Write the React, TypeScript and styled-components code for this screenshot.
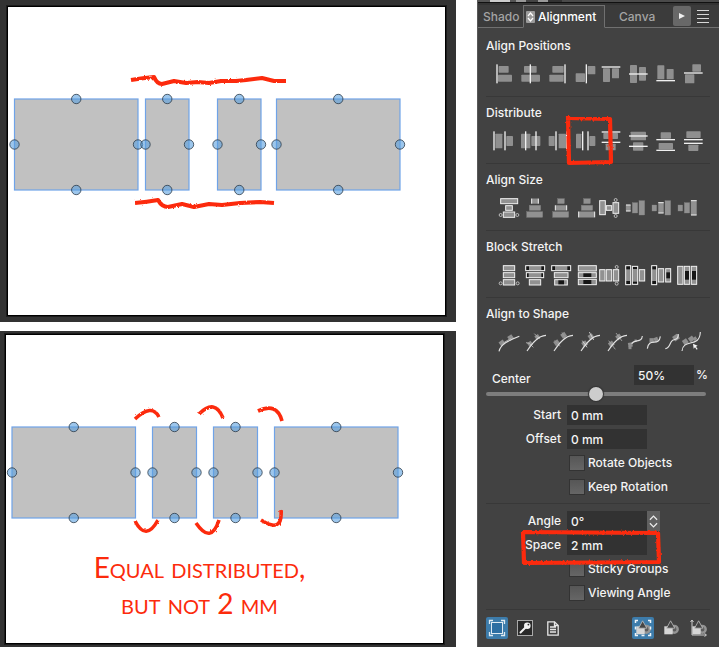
import React from "react";
import styled, { createGlobalStyle, css } from "styled-components";

const RED = "#fc2b0c";
const UI_FONT = `Inter, "Liberation Sans", sans-serif`;

const GlobalStyle = createGlobalStyle`
  *, *::before, *::after { box-sizing: border-box; }
  body { margin: 0; background: #fff; font-family: ${UI_FONT}; }
  button, input { font: inherit; color: inherit; }
`;

const Page = styled.main`
  display: grid;
  grid-template-columns: minmax(0, 1fr) 242px;
  column-gap: 21px;
  align-items: start;
`;

const Canvases = styled.div`
  display: flex;
  flex-direction: column;
  gap: 9px;
`;

const Frame = styled.section<{ $pad: string }>`
  padding: ${(p) => p.$pad};
  background: #333;
`;

const Artboard = styled.div`
  background: #fff;
  border: 1px solid #000;
  outline: 1px solid #1c1c1c;
`;

const Drawing = styled.svg`
  display: block;
  width: 100%;
  height: auto;
`;

const Note = styled.p`
  margin: 0;
  padding: 13px 50px 22px 0;
  color: ${RED};
  font: 400 28px/36px Lato, "Open Sans", sans-serif;
  font-variant-caps: small-caps;
  text-align: center;
`;

/* ---------- canvas objects ---------- */

type Block = { x: number; w: number };

const Blocks = ({ items, y }: { items: Block[]; y: number }) => {
  const h = 91;
  return (
    <>
      {items.map((b) => (
        <rect key={b.x} x={b.x} y={y} width={b.w} height={h} fill="#c1c1c1" stroke="#6fa3e8" strokeWidth="1.2" />
      ))}
      {items.flatMap((b) =>
        [
          [b.x + b.w / 2, y],
          [b.x + b.w / 2, y + h],
          [b.x, y + h / 2],
          [b.x + b.w, y + h / 2],
        ].map(([cx, cy]) => (
          <circle
            key={`${cx}-${cy}`}
            cx={cx}
            cy={cy}
            r="4.7"
            fill="#5aa0e0"
            fillOpacity=".6"
            stroke="#24323f"
            strokeOpacity=".75"
            strokeWidth="1"
          />
        )),
      )}
    </>
  );
};

const Brush = ({ id, paths, width = 4.2 }: { id: string; paths: string[]; width?: number }) => (
  <>
    <filter id={id} x="-10%" y="-50%" width="120%" height="200%">
      <feTurbulence type="fractalNoise" baseFrequency=".5" numOctaves="2" seed="4" />
      <feDisplacementMap in="SourceGraphic" scale="2.5" />
    </filter>
    {paths.map((d) => (
      <path key={d} d={d} fill="none" stroke={RED} strokeWidth={width} strokeLinejoin="round" filter={`url(#${id})`} />
    ))}
  </>
);

/* ---------- panel ---------- */

const Panel = styled.aside`
  display: flex;
  flex-direction: column;
  background: #424242;
  color: #f4f4f4;
  font-size: 12px;
  font-weight: 500;
  line-height: 16px;
  border-left: 1px solid #585858;
  padding-bottom: 8px;
`;

const WindowEdge = styled.div`
  height: 5px;
  border-bottom: 2px solid #333;
  background: linear-gradient(
      90deg,
      #555 0 12px,
      #ccc 12px 32px,
      #555 32px 38px,
      #999 38px 48px,
      #444 48px 60px,
      #999 60px 70px,
      #333 70px 84px,
      #4a4a4a 84px 100%
    )
    0 0 / 100% 2px no-repeat #111;
`;

const TabBar = styled.div`
  display: flex;
  height: 23px;
  background: #3b3b3b;
`;

const Tab = styled.button<{ $active?: boolean; $width: number; $indent: number }>`
  display: flex;
  align-items: center;
  gap: 3px;
  width: ${(p) => p.$width}px;
  padding: 1px 0 0 ${(p) => p.$indent}px;
  overflow: hidden;
  white-space: nowrap;
  background: none;
  border: 0;
  border-bottom: 1px solid #707070;
  color: #a4a4a4;
  ${(p) =>
    p.$active &&
    css`
      background: #424242;
      border: 1px solid #707070;
      border-bottom-color: #424242;
      color: #fff;
    `}
`;

const TabEnd = styled.div`
  display: flex;
  flex: 1;
  justify-content: flex-end;
  align-items: center;
  gap: 5px;
  padding-right: 9px;
  border-bottom: 1px solid #707070;
`;

const ScrollTabs = styled.button`
  display: grid;
  place-items: center;
  width: 18px;
  height: 20px;
  padding: 0;
  border: 0;
  border-radius: 2px;
  background: #686868;
`;

const PlainButton = styled.button`
  display: grid;
  padding: 0;
  border: 0;
  background: none;
`;

const Sections = styled.div`
  display: flex;
  flex-direction: column;
  padding: 2px 9px 0 8px;
`;

const Section = styled.section<{ $last?: boolean }>`
  padding: 8px 0 12px;
  border-bottom: 1px solid ${(p) => (p.$last ? "transparent" : "#383838")};
`;

const Title = styled.h2`
  margin: 0 0 10px;
  font-size: 12px;
  font-weight: 500;
  line-height: 16px;
`;

const IconRow = styled.div<{ $indent: number; $gap: number }>`
  display: flex;
  gap: ${(p) => p.$gap}px;
  padding-left: ${(p) => p.$indent}px;
`;

const IconGroup = styled.div<{ $gap: number }>`
  display: flex;
  gap: ${(p) => p.$gap}px;
`;

const IconButton = styled.button<{ $width?: number }>`
  position: relative;
  display: block;
  flex: none;
  width: ${(p) => p.$width ?? 20}px;
  height: 20px;
  padding: 0;
  border: 0;
  background: none;
`;

const IconSvg = styled.svg`
  display: block;
  width: 100%;
  height: 20px;
  overflow: visible;
`;

const Marker = styled.svg<{ $top: number; $left: number }>`
  position: absolute;
  z-index: 1;
  top: ${(p) => p.$top}px;
  left: ${(p) => p.$left}px;
  overflow: visible;
  pointer-events: none;
`;

const CenterRow = styled.div`
  display: flex;
  align-items: center;
  gap: 2px;
  padding-left: 6px;
  height: 20px;
`;

const CenterLabel = styled.label`
  flex: 1;
  padding-top: 8px;
`;

const Field = styled.input<{ $width: number }>`
  width: ${(p) => p.$width}px;
  height: 20px;
  padding: 0 4px;
  border: 0;
  border-radius: 0;
  background: #323232;
  outline: none;
`;

const Unit = styled.span`
  width: 14px;
`;

const Slider = styled.input`
  appearance: none;
  width: 220px;
  height: 18px;
  margin: 0;
  background: none;
  &::-webkit-slider-runnable-track {
    height: 4px;
    border-radius: 2px;
    background: #7d7d7d;
  }
  &::-webkit-slider-thumb {
    appearance: none;
    width: 14px;
    height: 14px;
    margin-top: -5px;
    border-radius: 50%;
    background: #cdcdcd;
    box-shadow: 0 0 1px 1px #333;
  }
`;

const FormGroup = styled.div<{ $top: number }>`
  display: flex;
  flex-direction: column;
  gap: 4px;
  padding: ${(p) => p.$top}px 0 6px;
  border-bottom: 1px solid #383838;
`;

const FormRow = styled.div`
  position: relative;
  display: grid;
  grid-template-columns: 75px auto auto;
  justify-content: start;
  align-items: center;
  height: 20px;
`;

const RowLabel = styled.label`
  text-align: right;
`;

const FieldCell = styled.div`
  display: flex;
  padding-left: 6px;
`;

const Stepper = styled.button`
  display: grid;
  place-items: center;
  width: 13px;
  height: 20px;
  padding: 0;
  border: 0;
  background: #606060;
`;

const CheckLabel = styled.label`
  display: flex;
  align-items: center;
  gap: 4px;
  height: 20px;
  padding-left: 84px;
`;

const Check = styled.input`
  appearance: none;
  width: 14px;
  height: 14px;
  margin: 0;
  background: linear-gradient(#565656, #666);
  box-shadow: 0 0 0 1px #333;
`;

const Toolbar = styled.div`
  display: flex;
  justify-content: space-between;
  padding-top: 7px;
`;

const ToolButton = styled.button<{ $on?: boolean }>`
  display: grid;
  place-items: center;
  width: 22px;
  height: 22px;
  padding: 0;
  border: 0;
  border-radius: 2px;
  background: ${(p) => (p.$on ? "#3d7cab" : "none")};
`;

/* ---------- icon parts, drawn on a 60-unit square ---------- */

type Box = [number, number, number, number];

const Guides = ({ boxes, lines }: { boxes: Box[]; lines: Box[] }) => (
  <IconSvg viewBox="0 0 60 60" aria-hidden="true">
    {boxes.map(([x, y, w, h], i) => (
      <rect key={i} x={x} y={y} width={w} height={h} rx="2" fill="#8f8f8f" />
    ))}
    {lines.map(([x, y, w, h], i) => (
      <rect key={i} x={x} y={y} width={w} height={h} fill="#f0f0f0" />
    ))}
  </IconSvg>
);

const v = (x: number): Box => [x, 1, 4, 57];
const hz = (x: number, y: number): Box => [x, y, 56, 4];

const positions: { name: string; boxes: Box[]; lines: Box[] }[] = [
  { name: "Align left", boxes: [[17, 6, 30, 20], [15, 32, 42, 21]], lines: [v(10)] },
  { name: "Align center", boxes: [[12, 6, 38, 20], [4, 32, 56, 21]], lines: [v(29)] },
  { name: "Align right", boxes: [[16, 6, 34, 20], [7, 32, 43, 21]], lines: [v(52)] },
  { name: "Align beside", boxes: [[41, 6, 23, 25], [5, 28, 28, 26]], lines: [v(35)] },
  { name: "Align top", boxes: [[6, 13, 21, 41], [33, 13, 21, 30]], lines: [hz(2, 7)] },
  { name: "Align middle", boxes: [[6, 3, 21, 54], [33, 9, 21, 41]], lines: [hz(3, 28)] },
  { name: "Align bottom", boxes: [[7, 4, 21, 42], [35, 15, 21, 31]], lines: [hz(4, 48)] },
  { name: "Align above", boxes: [[31, 1, 26, 22], [9, 31, 28, 27]], lines: [hz(6, 25)] },
];

const distribute: typeof positions = [
  { name: "Distribute left edges", boxes: [[7, 8, 21, 44], [40, 15, 20, 30]], lines: [v(1), v(34)] },
  { name: "Distribute centers", boxes: [[3, 8, 28, 44], [34, 15, 27, 30]], lines: [v(15), v(46)] },
  { name: "Distribute right edges", boxes: [[5, 15, 18, 30], [35, 8, 22, 44]], lines: [v(25), v(57)] },
  { name: "Distribute horizontal space", boxes: [[6, 8, 16, 44], [46, 15, 18, 30]], lines: [v(24), v(40)] },
  { name: "Distribute top edges", boxes: [[7, 6, 44, 18], [14, 38, 30, 20]], lines: [hz(2, 1), hz(2, 32)] },
  { name: "Distribute middles", boxes: [[8, 2, 46, 26], [15, 34, 31, 25]], lines: [hz(3, 13), hz(3, 44)] },
  { name: "Distribute bottom edges", boxes: [[17, 4, 31, 19], [11, 36, 43, 19]], lines: [hz(4, 24), hz(4, 56)] },
  { name: "Distribute vertical space", boxes: [[13, 1, 43, 20], [19, 41, 30, 19]], lines: [hz(6, 24), hz(6, 35)] },
];

const Bar = ({ b, line = true }: { b: Box; line?: boolean }) => (
  <rect
    x={b[0]}
    y={b[1]}
    width={b[2]}
    height={b[3]}
    fill="#919191"
    stroke={line ? "#f0f0f0" : "#858585"}
    strokeWidth={line ? 3 : 1}
  />
);

const Dark = ({ b }: { b: Box }) => <rect x={b[0]} y={b[1]} width={b[2]} height={b[3]} fill="#161616" />;

const Knob = ({ x, y }: { x: number; y: number }) => (
  <circle cx={x} cy={y} r="4.5" fill="none" stroke="#d0d0d0" strokeWidth="2.5" />
);

const stackV: Box[] = [[20, 2, 20, 15], [13, 22, 34, 15], [5, 41, 48, 17]];
const stackH: Box[] = [[3, 21, 14, 18], [22, 14, 16, 31], [42, 8, 17, 43]];

const Stack = ({ horizontal, on }: { horizontal?: boolean; on: number }) => {
  const bars = horizontal ? stackH : stackV;
  const [x, y, w, h] = bars[on];
  return (
    <>
      {bars.map((b, i) => (
        <Bar key={i} b={b} line={false} />
      ))}
      <path
        d={horizontal ? `M${x} ${y}h${w}M${x} ${y + h}h${w}` : `M${x} ${y}v${h}M${x + w} ${y}v${h}`}
        stroke="#f0f0f0"
        strokeWidth="3"
      />
    </>
  );
};

const sizeIcons = [
  <>
    <Bar b={[5, 2, 51, 15]} />
    <Bar b={[20, 23, 20, 14]} />
    <Bar b={[13, 42, 34, 16]} />
    <Knob x={5} y={51} />
    <Knob x={55} y={51} />
  </>,
  <Stack on={0} />,
  <Stack on={1} />,
  <Stack on={2} />,
  <>
    <Bar b={[2, 8, 17, 42]} />
    <Bar b={[22, 23, 16, 14]} />
    <Bar b={[42, 14, 17, 32]} />
    <Knob x={50} y={6} />
    <Knob x={50} y={54} />
  </>,
  <Stack horizontal on={0} />,
  <Stack horizontal on={1} />,
  <Stack horizontal on={2} />,
];

const stretchIcons = [
  <>
    <Bar b={[13, 2, 34, 15]} />
    <Bar b={[13, 23, 34, 15]} />
    <Bar b={[13, 44, 34, 16]} />
    <Knob x={5} y={55} />
    <Knob x={56} y={55} />
  </>,
  <>
    <Bar b={[2, 2, 57, 15]} />
    <Dark b={[4, 4, 8, 11]} />
    <Dark b={[49, 4, 8, 11]} />
    <Bar b={[4, 23, 52, 15]} />
    <Dark b={[6, 25, 5, 11]} />
    <Dark b={[49, 25, 5, 11]} />
    <Bar b={[13, 44, 34, 16]} />
  </>,
  <>
    <Bar b={[2, 2, 57, 15]} />
    <Dark b={[4, 4, 8, 11]} />
    <Dark b={[49, 4, 8, 11]} />
    <Bar b={[10, 23, 41, 15]} />
    <Bar b={[11, 44, 38, 16]} />
    <Dark b={[22, 46, 17, 12]} />
  </>,
  <>
    <Bar b={[4, 2, 54, 16]} />
    <Bar b={[4, 23, 54, 15]} />
    <Dark b={[19, 25, 24, 11]} />
    <Bar b={[4, 43, 54, 16]} />
    <Dark b={[19, 45, 24, 12]} />
  </>,
  <>
    <Bar b={[2, 14, 16, 34]} />
    <Bar b={[22, 14, 16, 34]} />
    <Bar b={[43, 14, 16, 34]} />
    <Knob x={53} y={6} />
    <Knob x={53} y={56} />
  </>,
  <>
    <Bar b={[2, 2, 15, 57]} />
    <Dark b={[4, 4, 11, 9]} />
    <Dark b={[4, 48, 11, 9]} />
    <Bar b={[22, 4, 16, 54]} />
    <Dark b={[24, 6, 12, 6]} />
    <Dark b={[24, 50, 12, 6]} />
    <Bar b={[43, 14, 16, 34]} />
  </>,
  <>
    <Bar b={[2, 2, 15, 57]} />
    <Dark b={[4, 4, 11, 9]} />
    <Dark b={[4, 48, 11, 9]} />
    <Bar b={[22, 11, 16, 40]} />
    <Bar b={[44, 11, 15, 40]} />
    <Dark b={[46, 22, 11, 18]} />
  </>,
  <>
    <Bar b={[2, 4, 16, 54]} />
    <Bar b={[22, 4, 16, 54]} />
    <Dark b={[24, 18, 12, 26]} />
    <Bar b={[43, 4, 16, 54]} />
    <Dark b={[45, 18, 12, 26]} />
  </>,
];

const Curve = ({ d }: { d: string }) => <path d={d} fill="none" stroke="#e2e2e2" strokeWidth="3.4" />;
const Chip = ({ x, y, s = 15, a = -35 }: { x: number; y: number; s?: number; a?: number }) => (
  <rect x={x - s / 2} y={y - s / 2} width={s} height={s} fill="#8e8e8e" transform={`rotate(${a} ${x} ${y})`} />
);
const mainCurve = "M6 57C16 42 23 33 33 24C42 15 50 11 63 10";

const shapeIcons = [
  <>
    <Chip x={12} y={33} />
    <Chip x={38} y={17} />
    <path d="M14 34L40 18" stroke="#a8a8a8" strokeWidth="3" />
    <Curve d="M3 58C8 36 30 26 64 13" />
  </>,
  <>
    <Chip x={15} y={35} s={13} />
    <Chip x={37} y={15} s={13} />
    <path d="M3 32l10 2 12 12M28 5l6 6 10 10" stroke="#bbb" strokeWidth="2.5" fill="none" />
    <Curve d={mainCurve} />
  </>,
  <>
    <Chip x={14} y={32} />
    <Chip x={35} y={10} />
    <path d="M8 25l16 18M30 1l10 20" stroke="#999" strokeWidth="2.5" />
    <Curve d={mainCurve} />
  </>,
  <>
    <Chip x={17} y={35} />
    <Chip x={36} y={14} />
    <path d="M10 26l14 20M31 0l13 24" stroke="#ddd" strokeWidth="2.5" />
    <Curve d={mainCurve} />
  </>,
  <>
    <Chip x={16} y={36} />
    <Chip x={38} y={15} />
    <path d="M8 26l20 26M30 3l18 24" stroke="#aaa" strokeWidth="2.5" />
    <Curve d={mainCurve} />
  </>,
];

const smallShapeIcons = [
  <>
    <Chip x={13} y={38} s={13} a={-10} />
    <Chip x={12} y={47} s={9} a={0} />
    <Chip x={29} y={26} s={7} a={0} />
    <Curve d="M17 35C26 20 47 34 49 12" />
  </>,
  <>
    <Chip x={20} y={25} s={13} a={0} />
    <Chip x={33} y={22} s={12} a={-20} />
    <Curve d="M7 50C11 14 42 46 46 13" />
  </>,
  <>
    <Chip x={36} y={17} s={17} />
    <Chip x={41} y={10} s={8} a={0} />
    <Curve d="M4 50C20 48 16 30 26 25C38 20 43 20 43 7" />
  </>,
  <>
    <Chip x={7} y={29} />
    <Chip x={25} y={21} />
    <Chip x={36} y={20} s={10} />
    <Curve d="M-3 57C0 18 50 50 52 0" />
    <path d="M30 35l14 6-5 3 5 7-3 2-5-7-4 4z" fill="#f4f4f4" />
  </>,
];

const Chevrons = () => (
  <svg width="9" height="13" viewBox="0 0 10 14" fill="none" stroke="#ececec" strokeWidth="1.4" aria-hidden="true">
    <path d="M1 5l4-4 4 4M1 9l4 4 4-4" />
  </svg>
);

/* Square, triangle and ring shared by the three object tools */
const Shapes = () => (
  <>
    <circle cx="14.3" cy="12.3" r="3.4" fill="#5c5c5c" stroke="#949494" strokeWidth="2.4" />
    <rect x="4.3" y="9.300" width="8.400" height="8" fill="#d6d6d6" />
    <path d="M10.600 3.800L14.800 11.200H6.600z" fill="#454545" stroke="#c0c0c0" strokeWidth=".8" />
  </>
);

const App = () => (
  <>
    <GlobalStyle />
    <Page>
      <Canvases>
        <Frame $pad="6px 10px 6px 7px" aria-label="Uneven distribution">
          <Artboard>
            <Drawing viewBox="8 7 437 308" role="img" aria-label="Four selected blocks with unequal gaps">
              <Blocks
                y={99}
                items={[
                  { x: 14.5, w: 123.5 },
                  { x: 145.5, w: 43.5 },
                  { x: 217.5, w: 43.5 },
                  { x: 276.5, w: 123.5 },
                ]}
              />
              <Brush
                id="line"
                paths={[
                  "M131 80Q143 78 154 77Q157 84 162 84L174 81L186 83L198 82L209 83L221 81L236 81L246 80L262 78L274 81L286 81",
                  "M135 203Q147 202 158 200Q162 207 168 207L182 204L194 207L209 204L222 205L240 203L260 202L274 203",
                ]}
              />
            </Drawing>
          </Artboard>
        </Frame>
        <Frame $pad="3px 12px 3px 5px" aria-label="Even distribution">
          <Artboard>
            <Drawing viewBox="6 335 437 201" role="img" aria-label="Four selected blocks with equal gaps">
              <Blocks
                y={427}
                items={[
                  { x: 12, w: 123.5 },
                  { x: 152.5, w: 44 },
                  { x: 213.5, w: 44 },
                  { x: 274.5, w: 123.5 },
                ]}
              />
              <Brush
                id="arc"
                width={3.6}
                paths={[
                  "M135 419Q152 403 159 417",
                  "M199 414Q215 398 223 418",
                  "M258 411Q277 402 282 421",
                  "M135 521Q146 542 158 520",
                  "M196 523Q211 545 219 520",
                  "M261 520Q283 534 281 510",
                ]}
              />
            </Drawing>
            <Note>
              Equal distributed,
              <br />
              but not 2 mm
            </Note>
          </Artboard>
        </Frame>
      </Canvases>

      <Panel>
        <WindowEdge />
        <TabBar role="tablist">
          <Tab role="tab" $width={45} $indent={5}>
            Shado
          </Tab>
          <Tab role="tab" aria-selected="true" $active $width={82} $indent={2}>
            <svg width="9" height="12" viewBox="0 0 9 12" aria-hidden="true">
              <rect width="9" height="12" rx="1" fill="#9b9b9b" />
              <path d="M2 5l2.500-3L7 5M2 7l2.500 3L7 7" fill="none" stroke="#fff" strokeWidth="1.200" />
            </svg>
            Alignment
          </Tab>
          <Tab role="tab" $width={56} $indent={14}>
            Canva
          </Tab>
          <TabEnd>
            <ScrollTabs aria-label="More tabs">
              <svg width="6" height="6" viewBox="0 0 6 6" aria-hidden="true">
                <path d="M0 0l6 3-6 3z" fill="#f0f0f0" />
              </svg>
            </ScrollTabs>
            <PlainButton aria-label="Panel menu">
              <svg width="14" height="13" viewBox="0 0 14 13" aria-hidden="true">
                <path d="M1 .5h12M1 4.500h12M1 8.500h12M1 12.500h12" stroke="#d8d8d8" strokeWidth="1" />
              </svg>
            </PlainButton>
          </TabEnd>
        </TabBar>

        <Sections>
          <Section>
            <Title>Align Positions</Title>
            <IconRow $indent={7} $gap={7}>
              {positions.map((p) => (
                <IconButton key={p.name} aria-label={p.name}>
                  <Guides boxes={p.boxes} lines={p.lines} />
                </IconButton>
              ))}
            </IconRow>
          </Section>
          <Section>
            <Title>Distribute</Title>
            <IconRow $indent={7} $gap={7}>
              {distribute.map((p, i) => (
                <IconButton key={p.name} aria-label={p.name}>
                  <Guides boxes={p.boxes} lines={p.lines} />
                  {i === 3 && (
                    <Marker $top={-16} $left={-9} width="48" height="50" viewBox="0 0 48 50" aria-hidden="true">
                      <Brush id="square" paths={["M3 1L4 48L46 47L45 4L1 3"]} />
                    </Marker>
                  )}
                </IconButton>
              ))}
            </IconRow>
          </Section>
          <Section>
            <Title>Align Size</Title>
            <IconRow $indent={13} $gap={2}>
              {[sizeIcons.slice(0, 4), sizeIcons.slice(4)].map((group, g) => (
                <IconGroup key={g} $gap={6}>
                  {group.map((icon, i) => (
                    <IconButton key={i} aria-label={`Match ${g ? "height" : "width"} ${i + 1}`}>
                      <IconSvg viewBox="0 0 60 60">{icon}</IconSvg>
                    </IconButton>
                  ))}
                </IconGroup>
              ))}
            </IconRow>
          </Section>
          <Section>
            <Title>Block Stretch</Title>
            <IconRow $indent={13} $gap={2}>
              {[stretchIcons.slice(0, 4), stretchIcons.slice(4)].map((group, g) => (
                <IconGroup key={g} $gap={6}>
                  {group.map((icon, i) => (
                    <IconButton key={i} aria-label={`Stretch ${g ? "height" : "width"} ${i + 1}`}>
                      <IconSvg viewBox="0 0 60 60">{icon}</IconSvg>
                    </IconButton>
                  ))}
                </IconGroup>
              ))}
            </IconRow>
          </Section>
          <Section $last>
            <Title>Align to Shape</Title>
            <IconRow $indent={12} $gap={0}>
              <IconGroup $gap={7}>
                {shapeIcons.map((icon, i) => (
                  <IconButton key={i} aria-label={`Align to path ${i + 1}`}>
                    <IconSvg viewBox="0 0 60 60">{icon}</IconSvg>
                  </IconButton>
                ))}
              </IconGroup>
              <IconGroup $gap={1}>
                {smallShapeIcons.map((icon, i) => (
                  <IconButton key={i} $width={18} aria-label={`Place on path ${i + 1}`}>
                    <IconSvg viewBox="0 0 54 60">{icon}</IconSvg>
                  </IconButton>
                ))}
              </IconGroup>
            </IconRow>
          </Section>

          <CenterRow>
            <CenterLabel htmlFor="center">Center</CenterLabel>
            <Field id="center" $width={60} defaultValue="50%" />
            <Unit>%</Unit>
          </CenterRow>
          <Slider type="range" min={0} max={100} defaultValue={50} aria-label="Center position" />

          <FormGroup $top={2}>
            <FormRow>
              <RowLabel htmlFor="start">Start</RowLabel>
              <FieldCell>
                <Field id="start" $width={80} defaultValue="0 mm" />
              </FieldCell>
            </FormRow>
            <FormRow>
              <RowLabel htmlFor="offset">Offset</RowLabel>
              <FieldCell>
                <Field id="offset" $width={80} defaultValue="0 mm" />
              </FieldCell>
            </FormRow>
            <CheckLabel>
              <Check type="checkbox" />
              Rotate Objects
            </CheckLabel>
            <CheckLabel>
              <Check type="checkbox" />
              Keep Rotation
            </CheckLabel>
          </FormGroup>

          <FormGroup $top={7}>
            <FormRow>
              <RowLabel htmlFor="angle">Angle</RowLabel>
              <FieldCell>
                <Field id="angle" $width={80} defaultValue="0°" />
                <Stepper aria-label="Step angle">
                  <Chevrons />
                </Stepper>
              </FieldCell>
            </FormRow>
            <FormRow>
              <RowLabel htmlFor="space">Space</RowLabel>
              <FieldCell>
                <Field id="space" $width={80} defaultValue="2 mm" />
              </FieldCell>
              <Marker $top={-5} $left={35} width="142" height="36" viewBox="0 0 142 36" aria-hidden="true">
                <Brush id="frame" paths={["M2 2L3 33L138 32L137 3L1 2"]} />
              </Marker>
            </FormRow>
            <CheckLabel>
              <Check type="checkbox" />
              Sticky Groups
            </CheckLabel>
            <CheckLabel>
              <Check type="checkbox" />
              Viewing Angle
            </CheckLabel>
          </FormGroup>

          <Toolbar>
            <IconGroup $gap={6}>
              <ToolButton $on aria-label="Selection bounds">
                <svg width="18" height="18" viewBox="0 0 18 18" fill="none" stroke="#dfeaf2" aria-hidden="true">
                  <rect x="3.500" y="3.500" width="11" height="11" fill="#2d6fa3" />
                  <path d="M1.500 5V1.500H5M13 1.500h3.500V5M16.500 13v3.500H13M5 16.500H1.500V13" strokeWidth="1.300" />
                </svg>
              </ToolButton>
              <ToolButton aria-label="Key object">
                <svg width="16" height="16" viewBox="0 0 16 16" aria-hidden="true">
                  <rect x=".5" y=".5" width="15" height="15" fill="#292929" stroke="#aaa" />
                  <path d="M3.500 12.500L8.500 7.500" stroke="#f2f2f2" strokeWidth="2" strokeLinecap="round" />
                  <circle cx="10.300" cy="5.700" r="3.300" fill="#f2f2f2" />
                  <circle cx="11.400" cy="4.600" r=".9" fill="#292929" />
                </svg>
              </ToolButton>
              <ToolButton aria-label="Page">
                <svg width="12" height="15" viewBox="0 0 12 15" fill="none" stroke="#e6e6e6" strokeWidth="1.300" aria-hidden="true">
                  <path d="M.8.8h6.700l3.700 3.700v9.700H.8z" />
                  <path d="M7.500.8v3.700h3.700M3 6h6M3 8.500h6M3 11h6" />
                </svg>
              </ToolButton>
            </IconGroup>
            <IconGroup $gap={6}>
              <ToolButton $on aria-label="Group bounds">
                <svg width="22" height="22" viewBox="0 0 22 22" aria-hidden="true">
                  <Shapes />
                  <path
                    d="M3.500 6V3.500H6M16 3.500h2.500V6M18.500 16v2.500H16M6 18.500H3.500V16"
                    fill="none"
                    stroke="#eef4f8"
                    strokeWidth="1.500"
                  />
                  <path d="M9.500 18.500h3M3.500 9.500v3M18.500 9.500v3" stroke="#eef4f8" strokeWidth="1.500" />
                </svg>
              </ToolButton>
              <ToolButton aria-label="Objects">
                <svg width="22" height="22" viewBox="0 0 22 22" aria-hidden="true">
                  <Shapes />
                </svg>
              </ToolButton>
              <ToolButton aria-label="Object axes">
                <svg width="22" height="22" viewBox="0 0 22 22" aria-hidden="true">
                  <Shapes />
                  <path d="M4 3v15h14M2.500 5L4 3l1.500 2M16.500 16.500l2 1.500-2 1.500" fill="none" stroke="#ccc" />
                </svg>
              </ToolButton>
            </IconGroup>
          </Toolbar>
        </Sections>
      </Panel>
    </Page>
  </>
);

export default App;
